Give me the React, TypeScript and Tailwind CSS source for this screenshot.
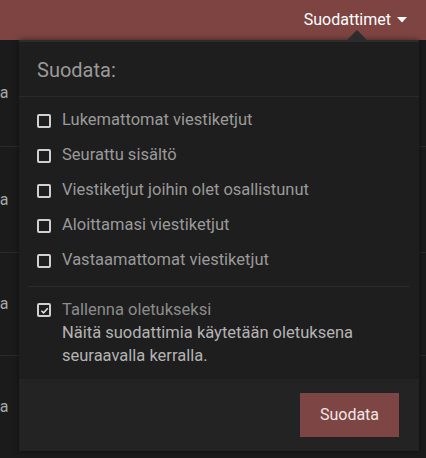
import { useState } from "react";

const filters = [
  "Lukemattomat viestiketjut",
  "Seurattu sisältö",
  "Viestiketjut joihin olet osallistunut",
  "Aloittamasi viestiketjut",
  "Vastaamattomat viestiketjut",
];

function Box({ checked }: { checked: boolean }) {
  return (
    <span className="flex h-[14px] w-[14px] shrink-0 items-center justify-center rounded-[2px] border-2 border-[#d0d0d0]">
      {checked && (
        <svg viewBox="0 0 10 10" className="h-[9px] w-[9px]">
          <path d="M1.5 5.2 L4 7.6 L8.6 2.4" fill="none" stroke="#e6e6e6" strokeWidth="1.6" />
        </svg>
      )}
    </span>
  );
}

export default function App() {
  const [checked, setChecked] = useState<boolean[]>(filters.map(() => false));
  const [saveDefault, setSaveDefault] = useState(true);

  return (
    <div className="relative h-[458px] w-[426px] overflow-hidden bg-[#1b1b1b] font-['Roboto',sans-serif]">
      {/* top bar */}
      <div className="flex h-[40px] items-center justify-end bg-[#7e4442] pr-[19px] text-white">
        <span className="text-[16px] leading-none">Suodattimet</span>
        <svg viewBox="0 0 10 6" className="ml-[6px] h-[6px] w-[10px]">
          <path d="M0 0 L10 0 L5 5.5 Z" fill="#fff" />
        </svg>
      </div>

      {/* list behind the menu, its text runs off the left edge */}
      <div className="text-[16px] text-[#a8a8a8]">
        {[0, 1, 2, 3].map((i) => (
          <div
            key={i}
            className={
              "flex items-center border-b border-[#2a2a2a] " +
              (i === 0 ? "h-[107px]" : i === 1 ? "h-[106px]" : "h-[103px]")
            }
          >
            <span className="-ml-[9px]">na</span>
          </div>
        ))}
      </div>

      {/* dropdown */}
      <div className="absolute left-[19px] top-[40px] w-[400px] border-t-2 border-[#2b2c2c] bg-[#1e1e1e] shadow-[0_0_6px_rgba(0,0,0,0.5)]">
        <div className="absolute -top-[12px] left-[328px] h-0 w-0 border-x-[10px] border-b-[10px] border-x-transparent border-b-[#2b2c2c]" />
        <div className="px-[18px] pb-[12px] pt-[14px] text-[20px] leading-[28px] text-[#9a9a9a]">Suodata:</div>
        <div className="border-t border-[#2a2a2a] pb-[8px] pt-[6px]">
          {filters.map((f, i) => (
            <label
              key={f}
              className="flex h-[35px] cursor-pointer items-center gap-[11px] px-[18px] text-[16.5px] text-[#9a9a9a]"
              onClick={() => setChecked(checked.map((c, j) => (j === i ? !c : c)))}
            >
              <Box checked={checked[i]} />
              <span>{f}</span>
            </label>
          ))}
        </div>
        <div className="mx-[9px] border-t border-[#2a2a2a]" />
        <div
          className="flex cursor-pointer gap-[11px] px-[18px] pb-[12px] pt-[11px] text-[16.5px] leading-[23px]"
          onClick={() => setSaveDefault(!saveDefault)}
        >
          <span className="pt-[5px]">
            <Box checked={saveDefault} />
          </span>
          <div>
            <div className="text-[#8c8c8c]">Tallenna oletukseksi</div>
            <div className="text-[#b4b4b4]">
              Näitä suodattimia käytetään oletuksena
              <br />
              seuraavalla kerralla.
            </div>
          </div>
        </div>
        <div className="flex justify-end bg-[#232323] py-[14px] pr-[20px]">
          <button className="h-[44px] w-[99px] bg-[#7d4543] text-[16px] text-[#f3e6e6]">Suodata</button>
        </div>
      </div>
    </div>
  );
}
